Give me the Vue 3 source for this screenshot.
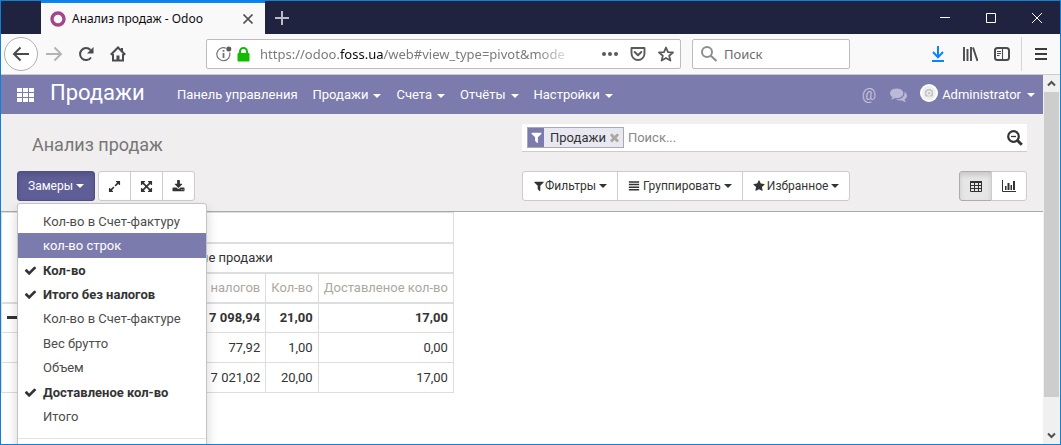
<script setup>
import { ref } from 'vue'

const icons = {
  check: 'M1671 566q0 40-28 68l-724 724-136 136q-28 28-68 28t-68-28l-136-136-362-362q-28-28-28-68t28-68l136-136q28-28 68-28t68 28l294 295 656-657q28-28 68-28t68 28l136 136q28 28 28 68z',
  times: 'M1490 1322q0 40-28 68l-136 136q-28 28-68 28t-68-28l-294-294-294 294q-28 28-68 28t-68-28l-136-136q-28-28-28-68t28-68l294-294-294-294q-28-28-28-68t28-68l136-136q28-28 68-28t68 28l294 294 294-294q28-28 68-28t68 28l136 136q28 28 28 68t-28 68l-294 294 294 294q28 28 28 68z',
  filter: 'M1595 295q17 41-14 70l-493 493v742q0 42-39 59-13 5-25 5-27 0-45-19l-256-256q-19-19-19-45v-486l-493-493q-31-29-14-70 17-39 59-39h1280q42 0 59 39z',
  star: 'M1728 647q0 22-26 48l-363 354 86 500q1 7 1 20 0 21-10.5 35.5t-30.5 14.5q-19 0-40-12l-449-236-449 236q-22 12-40 12-21 0-31.5-14.5t-10.5-35.5q0-6 2-20l86-500-364-354q-25-27-25-48 0-37 56-46l502-73 225-455q19-41 49-41t49 41l225 455 502 73q56 9 56 46z',
  bars: 'M128 192h1536v224h-1536zM128 576h1536v224h-1536zM128 960h1536v224h-1536zM128 1344h1536v224h-1536z',
  expand: 'M883 1056q0 13-10 23l-332 332 144 144q19 19 19 45t-19 45-45 19h-448q-26 0-45-19t-19-45v-448q0-26 19-45t45-19 45 19l144 144 332-332q10-10 23-10t23 10l114 114q10 10 10 23zm781-864v448q0 26-19 45t-45 19-45-19l-144-144-332 332q-10 10-23 10t-23-10l-114-114q-10-10-10-23t10-23l332-332-144-144q-19-19-19-45t19-45 45-19h448q26 0 45 19t19 45z',
  arrows: 'M1411 541l-355 355 355 355 144-144q29-31 70-14 39 17 39 59v448q0 26-19 45t-45 19h-448q-42 0-59-40-17-39 14-69l144-144-355-355-355 355 144 144q31 30 14 69-17 40-59 40h-448q-26 0-45-19t-19-45v-448q0-42 40-59 39-17 69 14l144 144 355-355-355-355-144 144q-19 19-45 19-12 0-24-5-40-17-40-59v-448q0-26 19-45t45-19h448q42 0 59 40 17 39-14 69l-144 144 355 355 355-355-144-144q-31-30-14-69 17-40 59-40h448q26 0 45 19t19 45v448q0 42-39 59-13 5-25 5-26 0-45-19z',
  download: 'M1344 1344q0-26-19-45t-45-19-45 19-19 45 19 45 45 19 45-19 19-45zm256 0q0-26-19-45t-45-19-45 19-19 45 19 45 45 19 45-19 19-45zm128-224v320q0 40-28 68t-68 28h-1472q-40 0-68-28t-28-68v-320q0-40 28-68t68-28h465l135 136q58 56 136 56t136-56l136-136h464q40 0 68 28t28 68zm-325-569q17 41-14 70l-448 448q-18 19-45 19t-45-19l-448-448q-31-29-14-70 17-39 59-39h256v-448q0-26 19-45t45-19h256q26 0 45 19t19 45v448h256q42 0 59 39z',
  comments: 'M1408 768q0 139-94 257t-256.5 186.5-353.5 68.5q-86 0-176-16-124 88-278 128-36 9-86 16h-3q-11 0-20.5-8t-11.5-21q-1-3-1-6.5t.5-6.5 2-6l2.5-5 3.5-5.5 4-5 4.5-5 4-4.5q5-6 23-25t26-29.5 22.5-29 25-38.5 20.5-44q-124-72-195-177t-71-224q0-139 94-257t256.5-186.5 353.5-68.5 353.5 68.5 256.5 186.5 94 257zm384 256q0 120-71 224.5t-195 176.5q10 24 20.5 44t25 38.5 22.5 29 26 29.5 23 25q1 1 4 4.5t4.5 5 4 5 3.5 5.5l2.5 5 2 6 .5 6.5-1 6.5q-3 14-13 22t-22 7q-50-7-86-16-154-40-278-128-90 16-176 16-271 0-472-132 58 4 88 4 161 0 309-45t264-129q125-92 192-212t67-254q0-77-23-152 129 71 204 178t75 230z',
}

const menus = ['Продажи', 'Счета', 'Отчёты', 'Настройки']

const measures = ref([
  { label: 'Кол-во в Счет-фактуру' },
  { label: 'кол-во строк', hover: true },
  { label: 'Кол-во', on: true },
  { label: 'Итого без налогов', on: true },
  { label: 'Кол-во в Счет-фактуре' },
  { label: 'Вес брутто' },
  { label: 'Объем' },
  { label: 'Доставленое кол-во', on: true },
  { label: 'Итого' },
])

const filters = [
  { icon: 'filter', label: 'Фильтры' },
  { icon: 'bars', label: 'Группировать' },
  { icon: 'star', label: 'Избранное' },
]

const tools = [
  { icon: 'expand', label: 'Поменять оси' },
  { icon: 'arrows', label: 'Развернуть всё' },
  { icon: 'download', label: 'Скачать xls' },
]

const rows = [
  { total: true, values: ['7 098,94', '21,00', '17,00'] },
  { values: ['77,92', '1,00', '0,00'] },
  { values: ['7 021,02', '20,00', '17,00'] },
]
</script>

<template>
  <div class="window">
    <header class="titlebar">
      <div class="tab">
        <svg class="favicon" viewBox="0 0 16 16"><circle cx="8" cy="8" r="6" fill="none" stroke="#a24689" stroke-width="3.4" /></svg>
        <span class="tab-title">Анализ продаж - Odoo</span>
        <button class="plain" aria-label="Закрыть вкладку">
          <svg width="12" height="12" viewBox="0 0 12 12"><path d="M1.5 1.5l9 9m0-9l-9 9" stroke="#4a4a4f" stroke-width="1.7" /></svg>
        </button>
      </div>
      <button class="plain newtab" aria-label="Новая вкладка">
        <svg width="14" height="14" viewBox="0 0 14 14"><path d="M7 0v14M0 7h14" stroke="#b9bbc6" stroke-width="2" /></svg>
      </button>
      <div class="win-controls">
        <button class="plain" aria-label="Свернуть"><svg width="10" height="10" viewBox="0 0 10 10"><path d="M0 4.5h10" stroke="#fff" /></svg></button>
        <button class="plain" aria-label="Развернуть"><svg width="10" height="10" viewBox="0 0 10 10"><path d="M.5.5h9v9h-9z" stroke="#fff" fill="none" /></svg></button>
        <button class="plain" aria-label="Закрыть"><svg width="10" height="10" viewBox="0 0 10 10"><path d="M0 0l10 10M10 0L0 10" stroke="#fff" /></svg></button>
      </div>
    </header>

    <div class="toolbar">
      <button class="plain back" aria-label="Назад">
        <svg width="18" height="16" viewBox="0 0 18 16"><path d="M17 8H2.5M8.500 1.500L2 8l6.500 6.500" fill="none" stroke="#4a4a4f" stroke-width="2" /></svg>
      </button>
      <button class="plain nav-btn" aria-label="Вперёд">
        <svg width="18" height="16" viewBox="0 0 18 16"><path d="M1 8h14.500M9.500 1.500L16 8l-6.500 6.500" fill="none" stroke="#b4b4b6" stroke-width="2" /></svg>
      </button>
      <button class="plain nav-btn" aria-label="Обновить">
        <svg width="16" height="16" viewBox="0 0 16 16"><path d="M13 11.500A6 6 0 1 1 12.500 4" fill="none" stroke="#4a4a4f" stroke-width="2" /><path d="M15.500 1v6.500H9z" fill="#4a4a4f" /></svg>
      </button>
      <button class="plain nav-btn" aria-label="Домой">
        <svg width="16" height="16" viewBox="0 0 16 16"><path d="M.8 8.800L8 1.500l7.200 7.300" fill="none" stroke="#4a4a4f" stroke-width="2" /><path d="M3 8v6.500h10V8" fill="none" stroke="#4a4a4f" stroke-width="2" /><path d="M6.500 14V9.500h3V14z" fill="#4a4a4f" /><path d="M12 2v3" stroke="#4a4a4f" stroke-width="2" /></svg>
      </button>

      <div class="field url">
        <svg width="16" height="16" viewBox="0 0 16 16"><path d="M10 2.300A6.500 6.500 0 1 0 13.600 6.500" fill="none" stroke="#737377" stroke-width="1.200" /><path d="M7.500 7v5M7.500 4v1.800" stroke="#737377" stroke-width="1.800" /><circle cx="12.800" cy="3" r="2.500" fill="#5a5a5e" /></svg>
        <svg width="13" height="15" viewBox="0 0 13 15"><path d="M3 7V4.500a3.500 3.500 0 0 1 7 0V7" fill="none" stroke="#12bc00" stroke-width="2" /><rect x="0.500" y="6" width="12" height="8.500" rx="1" fill="#12bc00" /></svg>
        <div class="address" role="textbox" aria-label="Адрес" tabindex="0">https://odoo.<b>foss.ua</b>/web#view_type=pivot&amp;mode</div>
        <div class="url-actions">
          <button class="plain" aria-label="Действия на странице"><svg width="16" height="16" viewBox="0 0 16 16"><g fill="#5a5a5e"><circle cx="2" cy="8" r="2" /><circle cx="8" cy="8" r="2" /><circle cx="14" cy="8" r="2" /></g></svg></button>
          <button class="plain" aria-label="Сохранить в Pocket"><svg width="16" height="16" viewBox="0 0 16 16"><path d="M1.500 2h13v5.500a6.500 6.500 0 0 1-13 0z" fill="none" stroke="#5a5a5e" stroke-width="1.900" stroke-linejoin="round" /><path d="M4.700 6L8 9.200 11.300 6" fill="none" stroke="#5a5a5e" stroke-width="2" stroke-linecap="round" stroke-linejoin="round" /></svg></button>
          <button class="plain" aria-label="Добавить в закладки"><svg width="16" height="16" viewBox="0 0 16 16"><path d="M8 1.500l2 4.600 5 .4-3.800 3.200 1.200 4.900L8 12l-4.400 2.600 1.200-4.900L1 6.500l5-.4z" fill="none" stroke="#5a5a5e" stroke-width="1.800" stroke-linejoin="round" /></svg></button>
        </div>
      </div>

      <label class="field find">
        <svg width="18" height="18" viewBox="0 0 18 18"><circle cx="7" cy="7" r="5" fill="none" stroke="#8e8e90" stroke-width="2" /><path d="M10.500 10.500l6 5.500" stroke="#8e8e90" stroke-width="2.200" /></svg>
        <input type="text" placeholder="Поиск" aria-label="Поиск" />
      </label>

      <div class="tool-icons">
        <button class="plain" aria-label="Загрузки"><svg width="16" height="16" viewBox="0 0 16 16"><path d="M8 0v11M3 6l5 5.300L13 6M2 15h12" fill="none" stroke="#0a84ff" stroke-width="2" /></svg></button>
        <button class="plain" aria-label="Библиотека"><svg width="16" height="16" viewBox="0 0 16 16"><path d="M2 1v14M5.500 3v12M9 1v14M11 1.500l4.500 13.500" fill="none" stroke="#4a4a4f" stroke-width="1.900" /></svg></button>
        <button class="plain" aria-label="Боковые панели"><svg width="16" height="16" viewBox="0 0 16 16"><rect x="1" y="2" width="14" height="12" rx="2.500" fill="none" stroke="#4a4a4f" stroke-width="2" /><path d="M8.500 2v12M3 5.500h4M3 7.500h4M3 9.500h2.500" stroke="#4a4a4f" stroke-width="1.100" /></svg></button>
        <span class="divider"></span>
        <button class="plain" aria-label="Меню"><svg width="12" height="12" viewBox="0 0 12 12"><path d="M0 1h12M0 6h12M0 11h12" stroke="#3a3a3f" stroke-width="2" /></svg></button>
      </div>
    </div>

    <div class="viewport">
      <div class="page">
        <nav class="navbar">
          <button class="plain apps" aria-label="Приложения">
            <svg width="18" height="14" viewBox="0 0 18 14" fill="#fff"><path d="M0 0h5v4H0zM6 0h5v4H6zM12 0h5v4h-5zM0 5h5v4H0zM6 5h5v4H6zM12 5h5v4h-5zM0 10h5v4H0zM6 10h5v4H6zM12 10h5v4h-5z" /></svg>
          </button>
          <div class="brand">Продажи</div>
          <a class="menu" href="#">Панель управления</a>
          <a v-for="m in menus" :key="m" class="menu" href="#">{{ m }}<i class="caret"></i></a>
          <div class="systray">
            <button class="plain at" aria-label="Упоминания">@</button>
            <button class="plain" aria-label="Сообщения"><svg class="chat" viewBox="0 0 1792 1792"><path :d="icons.comments" /></svg></button>
            <a class="user" href="#">
              <svg class="avatar" viewBox="0 0 18 18"><circle cx="9" cy="9" r="9" fill="#fff" /><circle cx="9" cy="9" r="7" fill="#eee" /><rect x="5" y="6" width="8" height="6.500" rx="1" fill="#c6c6c6" /><path d="M7 5h4v1H7z" fill="#c6c6c6" /><circle cx="9" cy="9.200" r="2" fill="none" stroke="#fff" /></svg>
              Administrator<i class="caret"></i>
            </a>
          </div>
        </nav>

        <section class="panel">
          <h1>Анализ продаж</h1>
          <div class="searchview">
            <div class="facet">
              <span class="facet-icon"><svg viewBox="0 0 1792 1792"><path :d="icons.filter" /></svg></span>
              <span class="facet-label">Продажи</span>
              <button class="plain facet-remove" aria-label="Удалить фильтр"><svg viewBox="0 0 1792 1792"><path :d="icons.times" /></svg></button>
            </div>
            <input type="text" placeholder="Поиск..." aria-label="Поиск записей" />
            <button class="plain zoom" aria-label="Расширенный поиск"><svg width="16" height="16" viewBox="0 0 16 16"><circle cx="6.500" cy="6.500" r="5.300" fill="none" stroke="#333" stroke-width="2.200" /><path d="M4 6.500h5" stroke="#333" stroke-width="1.300" /><path d="M10.500 10.500l4.300 4.300" stroke="#333" stroke-width="3" /></svg></button>
          </div>

          <div class="left-buttons">
            <div class="dropdown">
              <button class="btn primary" aria-expanded="true">Замеры<i class="caret"></i></button>
              <div class="dropdown-menu">
                <ul>
                  <li v-for="m in measures" :key="m.label">
                    <a href="#" :class="{ selected: m.on, hover: m.hover }">
                      <svg v-if="m.on" viewBox="0 0 1792 1792"><path :d="icons.check" /></svg>{{ m.label }}
                    </a>
                  </li>
                </ul>
                <hr />
              </div>
            </div>
            <div class="group">
              <button v-for="t in tools" :key="t.icon" class="btn" :aria-label="t.label"><svg viewBox="0 0 1792 1792"><path :d="icons[t.icon]" /></svg></button>
            </div>
          </div>

          <div class="right-buttons">
            <div class="group">
              <button v-for="f in filters" :key="f.icon" class="btn option" :class="f.icon"><svg viewBox="0 0 1792 1792"><path :d="icons[f.icon]" /></svg>{{ f.label }}<i class="caret"></i></button>
            </div>
            <div class="group">
              <button class="btn view active" aria-label="Сводная таблица"><svg class="sharp" width="12" height="11" viewBox="0 0 12 11"><path d="M.5 1.500h11v9H.5zM.5 4.500h11M.5 7.500h11M4.500 1v9.500M8.500 1v9.500" fill="none" stroke="#333" /><path d="M0 0h12v2H0z" /></svg></button>
              <button class="btn view" aria-label="График"><svg class="sharp chart" width="14" height="12" viewBox="0 0 14 12"><path d="M.5 0v11.500H14" fill="none" stroke="#333" /><path d="M3 6h1.500v4H3zM5.500 3h2v7h-2zM8.500 5H10v5H8.500zM11 1h2v9h-2z" /></svg></button>
            </div>
          </div>
        </section>

        <table>
          <thead>
            <tr>
              <th class="corner" rowspan="3"></th>
              <th colspan="3"></th>
            </tr>
            <tr>
              <th class="group-head" colspan="3">Прямые продажи</th>
            </tr>
            <tr class="measures">
              <th>Итого без налогов</th>
              <th>Кол-во</th>
              <th>Доставленое кол-во</th>
            </tr>
          </thead>
          <tbody>
            <tr v-for="(r, i) in rows" :key="i" :class="{ total: r.total }">
              <td class="row-head"><i v-if="r.total" class="minus"></i></td>
              <td v-for="(v, j) in r.values" :key="j">{{ v }}</td>
            </tr>
          </tbody>
        </table>
      </div>

      <div class="scrollbar">
        <svg width="17" height="17" viewBox="0 0 17 17"><path d="M5 10.500l3.500-3.500 3.500 3.500" fill="none" stroke="#505050" stroke-width="2" /></svg>
        <div class="track"><div class="thumb"></div></div>
        <svg width="17" height="17" viewBox="0 0 17 17"><path d="M5 6.500L8.500 10 12 6.500" fill="none" stroke="#505050" stroke-width="2" /></svg>
      </div>
    </div>
  </div>
</template>

<style>
html, body { overflow: hidden; }
</style>

<style scoped>
* { box-sizing: border-box; }
.window {
  height: 100vh;
  display: flex;
  flex-direction: column;
  overflow: hidden;
  border: 1px solid #0f80d8;
  background: #fff;
  font-family: Roboto, "Liberation Sans", sans-serif;
  font-size: 13px;
  color: #333;
}
svg { display: block; flex: none; }
a { color: inherit; text-decoration: none; }
.plain {
  flex: none;
  display: flex;
  align-items: center;
  justify-content: center;
  padding: 0;
  border: 0;
  background: none;
  color: inherit;
  font: inherit;
}
input {
  flex: 1;
  width: 0;
  min-width: 0;
  padding: 0;
  border: 0;
  outline: 0;
  background: none;
  font: inherit;
}

.titlebar {
  flex: none;
  height: 33px;
  display: flex;
  padding-left: 40px;
  background: #20233f;
}
.tab {
  width: 224px;
  display: flex;
  align-items: center;
  padding: 0 11px 0 9px;
  border-top: 2px solid #0a84ff;
  background: #f9f9fa;
  font: 12px "Noto Sans", "Open Sans", sans-serif;
  color: #0c0c0d;
}
.favicon { width: 16px; height: 16px; margin-right: 6px; }
.tab-title { flex: 1; white-space: nowrap; }
.newtab { width: 34px; }
.win-controls { display: flex; margin-left: auto; }
.win-controls button { width: 46px; }

.toolbar {
  flex: none;
  height: 41px;
  display: flex;
  align-items: center;
  padding: 0 13px 0 3px;
  border-bottom: 1px solid #ccc;
  background: #f9f9fa;
}
.back {
  width: 34px;
  height: 34px;
  border: 1px solid #b0b0b2;
  border-radius: 50%;
  background: #fff;
}
.nav-btn { width: 32px; height: 32px; }
.field {
  min-width: 0;
  height: 30px;
  display: flex;
  align-items: center;
  border: 1px solid #bdbdbf;
  border-radius: 2px;
  background: #fff;
  font: 13px "Noto Sans", "Open Sans", sans-serif;
  color: #7b7b7d;
}
.url { flex: 29 1 0; margin-left: 72px; padding: 0 6px 0 9px; gap: 5px; }
.address {
  flex: 1;
  min-width: 0;
  margin-left: 5px;
  overflow: hidden;
  white-space: nowrap;
  mask-image: linear-gradient(to right, #000 88%, transparent);
}
.address b { font-weight: 400; color: #0c0c0d; }
.url-actions { display: flex; gap: 12px; margin-left: 22px; }
.find { flex: 9 1 0; margin-left: 11px; padding: 0 7px; gap: 6px; }
.find input::placeholder { color: #6c6c6e; opacity: 1; }
.tool-icons { flex: none; display: flex; align-items: center; gap: 16px; margin-left: 80px; }
.divider { width: 1px; height: 34px; margin: 0 -3px 0 -5px; background: #d4d4d6; }

.viewport { flex: 1; min-height: 0; display: flex; }
.page { flex: 1; min-width: 0; overflow: hidden; }

.navbar {
  height: 39px;
  display: flex;
  align-items: center;
  padding: 0 8px 0 16px;
  background: #7c7bad;
  color: #fff;
}
.brand { width: 127px; margin-left: 15px; padding-bottom: 5px; font-size: 22px; }
.menu { margin-right: 15px; white-space: nowrap; }
.caret {
  display: inline-block;
  margin-left: 3px;
  border: 4px solid transparent;
  border-top-color: currentColor;
  border-bottom: 0;
  vertical-align: middle;
}
.navbar .caret { margin-left: 5px; }
.systray { display: flex; align-items: center; margin-left: auto; }
.at { margin-right: 14px; font-size: 16px; color: #c1c0db; }
.chat { width: 17px; height: 17px; fill: #bab9d7; }
.user { display: flex; align-items: center; gap: 4px; margin-left: 13px; }
.navbar .user .caret { margin-left: 2px; }
.avatar { width: 18px; height: 18px; margin-bottom: 4px; }

.panel {
  display: grid;
  grid-template-columns: 1fr 1fr;
  row-gap: 19px;
  padding: 10px 0;
  border-bottom: 1px solid #aaa;
  background: #f0eeee;
}
h1 {
  height: 28px;
  margin: 0;
  padding: 6px 0 0 31px;
  font-size: 18px;
  line-height: 30px;
  font-weight: 400;
  color: #777;
}
.searchview {
  height: 28px;
  display: flex;
  align-items: center;
  margin-right: 16px;
  padding: 0 4px 0 5px;
  border-bottom: 1px solid #ccc;
  background: #fff;
}
.facet {
  height: 21px;
  display: flex;
  align-items: center;
  margin-right: 4px;
  border: 1px solid #afa8a8;
  background: #e8e8f2;
  color: #333;
}
.facet-icon { width: 16px; height: 19px; display: flex; align-items: center; justify-content: center; background: #7c7bad; }
.facet-icon svg { width: 13px; height: 13px; fill: #fff; }
.facet-label { padding: 0 2px 0 6px; }
.facet-remove { padding-right: 2px; }
.facet-remove svg { width: 13px; height: 13px; fill: #aea79f; }
.searchview input::placeholder { color: #888; opacity: 1; }

.left-buttons { display: flex; gap: 3px; padding-left: 16px; }
.right-buttons { display: flex; justify-content: space-between; margin-right: 16px; }
.dropdown { position: relative; }
.group { display: flex; }
.btn {
  height: 30px;
  display: flex;
  align-items: center;
  padding: 0 10px;
  border: 1px solid #ccc;
  border-radius: 3px;
  background: #fff;
  color: #333;
  font: 12px Roboto, "Liberation Sans", sans-serif;
  white-space: nowrap;
}
.btn svg { width: 12px; height: 12px; fill: #333; }
.group .btn { margin-left: -1px; border-radius: 0; }
.group .btn:first-child { margin-left: 0; border-radius: 3px 0 0 3px; }
.group .btn:last-child { border-radius: 0 3px 3px 0; }
.option svg { margin-right: 2px; }
.btn.filter svg { margin-right: 0; }
.btn.bars svg { margin-right: 3px; }
.left-buttons .group .btn { width: 33px; padding: 0; justify-content: center; }
.left-buttons .group svg { width: 13px; height: 13px; }
.primary {
  border-color: #4f4e87;
  background: #5f5e97;
  color: #fff;
  box-shadow: inset 0 3px 5px rgba(0, 0, 0, .13);
}
.view { width: 33px; padding: 0; justify-content: center; }
.view + .view { width: 36px; }
.btn svg.sharp { width: 12px; height: 11px; }
.btn svg.chart { width: 14px; height: 12px; }
.btn.active { border-color: #adadad; background: #e6e6e6; box-shadow: inset 0 3px 5px rgba(0, 0, 0, .13); }

.dropdown-menu {
  position: absolute;
  z-index: 2;
  top: 100%;
  left: 0;
  width: 190px;
  margin-top: 2px;
  padding: 5px 0 40px;
  border: 1px solid #c4c4c4;
  border-radius: 3px;
  background: #fff;
  box-shadow: 0 6px 12px rgba(0, 0, 0, .18);
}
.dropdown-menu ul {
  height: 220px;
  display: flex;
  flex-direction: column;
  margin: 0;
  padding: 0;
  list-style: none;
}
.dropdown-menu li { flex: 1; display: flex; }
.dropdown-menu a {
  position: relative;
  flex: 1;
  display: flex;
  align-items: center;
  padding-left: 25px;
  color: #4c4c4c;
  white-space: nowrap;
}
.dropdown-menu a.selected { font-weight: 700; color: #333; }
.dropdown-menu a.hover { background: #7c7bad; color: #fff; }
.dropdown-menu svg { position: absolute; left: 6px; width: 13px; height: 13px; fill: #333; }
.dropdown-menu hr { height: 1px; margin: 9px 0; border: 0; background: #e5e5e5; }

table { border-collapse: collapse; }
th, td {
  height: 30px;
  padding: 0 5px;
  border: 1px solid #ddd;
  font-weight: 400;
  text-align: right;
  white-space: nowrap;
}
thead th { border-bottom-width: 2px; text-align: left; }
.corner, .row-head { width: 141px; min-width: 141px; }
.group-head { padding-left: 22px; }
.measures th { color: #aea79f; }
.total td { font-weight: 700; }
.minus { display: block; width: 11px; height: 3px; background: #333; }

.scrollbar { flex: none; width: 17px; display: flex; flex-direction: column; background: #f0f0f0; }
.track { flex: 1; padding: 0 1px; }
.thumb { height: 91%; background: #cdcdcd; }
</style>
